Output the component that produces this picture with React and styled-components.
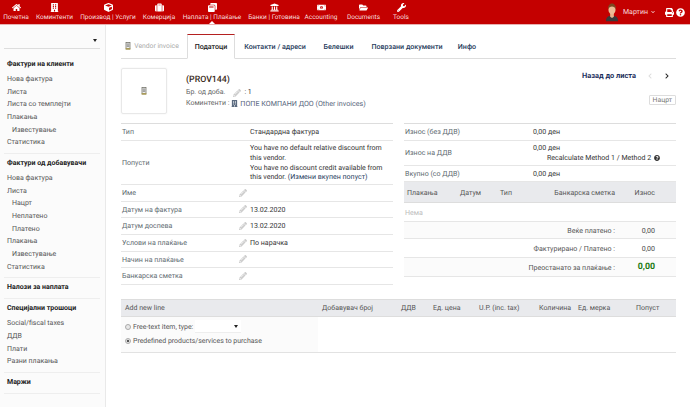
import styled, { createGlobalStyle } from "styled-components";
import {
  FaHome,
  FaBuilding,
  FaCube,
  FaSuitcase,
  FaWindowRestore,
  FaUniversity,
  FaMoneyBillAlt,
  FaFolderOpen,
  FaWrench,
  FaPrint,
  FaQuestionCircle,
  FaPencilAlt,
  FaChevronLeft,
  FaChevronRight,
  FaChevronDown,
} from "react-icons/fa";

const GlobalStyle = createGlobalStyle`
  html, body {
    margin: 0;
    padding: 0;
    background: #fff;
  }
  body {
    font-family: Roboto, "Liberation Sans", sans-serif;
    font-size: 7px;
    color: #333;
    overflow: hidden;
    text-rendering: geometricPrecision;
  }
  * {
    box-sizing: border-box;
  }
`;

const Page = styled.div`
  width: 690px;
  height: 407px;
  display: flex;
  flex-direction: column;
  overflow: hidden;
`;

const TopBar = styled.div`
  height: 25px;
  flex: none;
  background: #c40000;
  border-bottom: 1px solid #e8b0b0;
  display: flex;
  align-items: flex-start;
  padding-left: 3px;
  color: #f6dede;
  position: relative;
`;

const NavItem = styled.div`
  width: ${({ $w }) => $w}px;
  margin-right: ${({ $gap }) => $gap}px;
  flex: none;
  height: 24px;
  display: flex;
  flex-direction: column;
  align-items: center;
  padding-top: 3px;
  font-size: 6.5px;
  line-height: 9px;
  white-space: nowrap;
  position: relative;

  svg {
    display: block;
    width: 9px;
    height: 9px;
    color: #fff;
    margin-bottom: 1px;
  }

  ${({ $active }) =>
    $active &&
    `
    &::after {
      content: "";
      position: absolute;
      bottom: 0;
      left: 50%;
      margin-left: -3px;
      border-left: 3px solid transparent;
      border-right: 3px solid transparent;
      border-bottom: 3px solid #fff;
    }
  `}
`;

const UserBox = styled.div`
  margin-left: auto;
  height: 24px;
  display: flex;
  align-items: center;
  padding-right: 5px;
  font-size: 7px;

  svg.chev {
    width: 4px;
    height: 4px;
    margin: 0 8px 0 3px;
  }
  svg.tool {
    width: 9px;
    height: 9px;
    color: #fff;
    margin-left: 2px;
  }
`;

const Avatar = styled.svg`
  width: 14px;
  height: 20px;
  margin-right: 4px;
`;

const Body = styled.div`
  flex: 1;
  display: flex;
  min-height: 0;
`;

const Sidebar = styled.div`
  width: 106px;
  flex: none;
  background: #fbfbfb;
  border-right: 1px solid #e9e9e9;
  padding: 10px 5px 0 4px;
`;

const SideSelect = styled.div`
  height: 14px;
  border-bottom: 1px solid #ddd;
  position: relative;
  margin-bottom: 10px;

  &::after {
    content: "";
    position: absolute;
    right: 3px;
    top: 4px;
    border-left: 2px solid transparent;
    border-right: 2px solid transparent;
    border-top: 3px solid #222;
  }
`;

const SideGroup = styled.div`
  border-bottom: 1px solid #eee;
  padding: 0 0 ${({ $pb }) => $pb}px 3px;
  margin-bottom: 4px;
`;

const SideTitle = styled.div`
  font-weight: 700;
  color: #222;
  font-size: 7px;
  line-height: 11px;
`;

const SideLink = styled.div`
  color: #555;
  font-size: 7px;
  line-height: 12.65px;
  padding-left: ${({ $sub }) => ($sub ? 5 : 0)}px;
  white-space: nowrap;

  ${SideTitle} + & {
    margin-top: 3px;
  }
`;

const Main = styled.div`
  flex: 1;
  min-width: 0;
  padding: 9px 14px 0 15px;
`;

const Tabs = styled.div`
  height: 25px;
  display: flex;
  align-items: flex-end;
  border-bottom: 1px solid #ddd;
`;

const Tab = styled.div`
  height: 24px;
  width: ${({ $w }) => $w}px;
  flex: none;
  display: flex;
  align-items: center;
  justify-content: center;
  gap: 2px;
  font-size: 7.1px;
  font-weight: 500;
  white-space: nowrap;
  color: ${({ $muted }) => ($muted ? "#aaa" : "#263c5c")};

  ${({ $muted }) => $muted && "font-weight: 400; font-size: 6.8px; padding-right: 5px;"}
  ${({ $active }) =>
    $active &&
    `
    color: #222;
    background: #fff;
    border: 1px solid #ddd;
    border-top: 1px solid #b52020;
    border-bottom: 1px solid #fff;
    margin-bottom: -1px;
    height: 25px;
  `}
`;

const DocIcon = styled.svg`
  width: ${({ $s }) => $s}px;
  height: ${({ $s }) => $s}px;
  flex: none;
`;

const Head = styled.div`
  height: 64px;
  display: flex;
  padding-top: 9px;
`;

const Thumb = styled.div`
  width: 46px;
  height: 46px;
  flex: none;
  border: 1px solid #e8e8e8;
  border-radius: 2px;
  box-shadow: 0 0 2px #eee;
  display: flex;
  align-items: center;
  justify-content: center;
  margin-right: 19px;
`;

const HeadInfo = styled.div`
  flex: 1;
  padding-top: 6px;
`;

const RefTitle = styled.div`
  font-size: 8.8px;
  font-weight: 500;
  color: #3a2a20;
  line-height: 13px;
`;

const RefLine = styled.div`
  font-size: 7px;
  line-height: 11px;
  color: #666;
  display: flex;
  align-items: center;
  gap: 2px;

  span {
    color: #333;
  }
  b {
    font-weight: 400;
    font-size: 7.15px;
    color: #56657c;
  }
`;

const CompanyIcon = styled(FaBuilding)`
  width: 7px;
  height: 7px;
  color: #5b6b80;
`;

const HeadRight = styled.div`
  width: 95px;
  flex: none;
  display: flex;
  flex-direction: column;
  align-items: flex-end;
  padding-top: 3px;
`;

const BackRow = styled.div`
  display: flex;
  align-items: center;
  width: 100%;
  font-size: 7.4px;
  font-weight: 700;
  color: #1c2f5c;
  line-height: 10px;
  padding-right: 6px;
  justify-content: flex-end;

  svg {
    width: 6px;
    height: 6px;
    margin-left: 11px;
    color: #222;
  }
  svg.off {
    color: #ddd;
  }
`;

const Badge = styled.div`
  margin-top: 14px;
  border: 1px solid #ddd;
  border-radius: 1px;
  padding: 0 3px;
  height: 10px;
  line-height: 8px;
  font-size: 6.8px;
  color: #777;
`;

const Columns = styled.div`
  display: flex;
  justify-content: space-between;
`;

const Column = styled.div`
  width: 272px;
  border-top: 1px solid #ddd;
`;

const Row = styled.div`
  display: flex;
  align-items: center;
  height: ${({ $h }) => $h}px;
  border-bottom: 1px solid #e6e6e6;
  font-size: 7.05px;
  line-height: 9.6px;
`;

const Label = styled.div`
  width: ${({ $w }) => $w}px;
  flex: none;
  padding-left: 1px;
  color: #5e6a70;
`;

const PencilCell = styled.div`
  width: 11px;
  flex: none;
  display: flex;

  svg {
    width: 8px;
    height: 8px;
    color: #ccc;
  }
`;

const Value = styled.div`
  flex: 1;
  color: #333;
  min-width: 0;
`;

const ValueLink = styled.span`
  color: #263c5c;
`;

const Recalc = styled.div`
  padding-left: 14px;
  display: flex;
  align-items: center;
  gap: 3px;
  white-space: nowrap;
`;

const PayHead = styled.div`
  height: 21px;
  background: #e9eaed;
  border-bottom: 1px solid #ddd;
  display: grid;
  grid-template-columns: 53px 40px 115px 40px;
  align-items: center;
  padding-left: 3px;
  font-size: 7.05px;
  color: #555;
`;

const PayCell = styled.div`
  text-align: ${({ $right }) => ($right ? "right" : "left")};
  white-space: nowrap;
`;

const PayType = styled.span`
  float: left;
`;

const NoneRow = styled.div`
  height: 19px;
  border-bottom: 1px solid #e6e6e6;
  display: flex;
  align-items: center;
  padding-left: 1px;
  font-size: 7.05px;
  color: #bbb;
`;

const SumRow = styled.div`
  height: ${({ $h }) => $h}px;
  display: flex;
  align-items: center;
  justify-content: flex-end;
  padding-right: 21px;
  background: ${({ $shade }) => ($shade ? "#fbfbfb" : "#fff")};
  border-bottom: 1px solid #e6e6e6;
  font-size: 7.05px;
  color: #555;
`;

const SumValue = styled.div`
  width: 40px;
  text-align: right;
  color: ${({ $green }) => ($green ? "#1a7a10" : "#444")};
  font-size: ${({ $green }) => ($green ? 8.8 : 7.05)}px;
  font-weight: ${({ $green }) => ($green ? 700 : 400)};
`;

const Lines = styled.div`
  margin-top: 14px;
  border-bottom: 1px solid #e2e2e2;
`;

const LinesHead = styled.div`
  height: 18px;
  background: #e9eaed;
  border-top: 1px solid #ddd;
  border-bottom: 1px solid #ddd;
  display: grid;
  grid-template-columns: 197px 79px 32px 46px 60px 39px 58px 44px;
  align-items: center;
  padding-left: 4px;
  font-size: 7px;
  color: #555;
  white-space: nowrap;
`;

const LinesBody = styled.div`
  height: 35px;
`;

const AddCell = styled.div`
  width: 197px;
  height: 100%;
  background: #fbfbfb;
  padding: 3px 0 0 4px;
`;

const RadioRow = styled.div`
  display: flex;
  align-items: center;
  height: 14px;
  font-size: 6.95px;
  color: #555;
  white-space: nowrap;
`;

const Radio = styled.span`
  width: 6px;
  height: 6px;
  border-radius: 50%;
  border: 1px solid #aaa;
  background: ${({ $on }) =>
    $on ? "radial-gradient(circle, #555 0 1.4px, #eee 1.6px)" : "#e8e8e8"};
  margin-right: 2px;
  flex: none;
`;

const TypeSelect = styled.div`
  width: 46px;
  height: 13px;
  background: #fff;
  border-bottom: 1px solid #eee;
  margin-left: 2px;
  position: relative;

  &::after {
    content: "";
    position: absolute;
    right: 3px;
    top: 5px;
    border-left: 2px solid transparent;
    border-right: 2px solid transparent;
    border-top: 3px solid #222;
  }
`;

const InvoiceIcon = ({ size }) => (
  <DocIcon $s={size} viewBox="0 0 8 10">
    <rect x="1.500" y="0.500" width="5" height="7.500" fill="#eee" stroke="#6a6a60" strokeWidth="0.9" />
    <path d="M2.500 2.500h3M2.500 4h3M2.500 5.500h3" stroke="#555" strokeWidth="0.7" />
    <rect x="1" y="7.500" width="6" height="2.200" fill="#a89a5a" />
  </DocIcon>
);

const navItems = [
  { label: "Почетна", icon: <FaHome />, w: 26, gap: 7 },
  { label: "Коминтенти", icon: <FaBuilding />, w: 37, gap: 7 },
  { label: "Производ | Услуги", icon: <FaCube />, w: 56, gap: 7 },
  { label: "Комерција", icon: <FaSuitcase />, w: 32, gap: 8 },
  { label: "Наплата | Плаќање", icon: <FaWindowRestore />, w: 58, gap: 8, active: true },
  { label: "Банки | Готовина", icon: <FaUniversity />, w: 50, gap: 8 },
  { label: "Accounting", icon: <FaMoneyBillAlt />, w: 28, gap: 12 },
  { label: "Documents", icon: <FaFolderOpen />, w: 33, gap: 13 },
  { label: "Tools", icon: <FaWrench />, w: 16, gap: 0 },
];

const sideGroups = [
  {
    title: "Фактури на клиенти",
    links: [
      ["Нова фактура"],
      ["Листа"],
      ["Листа со темплејти"],
      ["Плакања"],
      ["Известување", true],
      ["Статистика"],
    ],
  },
  {
    title: "Фактури од добавувачи",
    links: [
      ["Нова фактура"],
      ["Листа"],
      ["Нацрт", true],
      ["Неплатено", true],
      ["Платено", true],
      ["Плакања"],
      ["Известување", true],
      ["Статистика"],
    ],
  },
  { title: "Налози за наплата", links: [] },
  {
    title: "Специјални трошоци",
    links: [["Social/fiscal taxes"], ["ДДВ"], ["Плати"], ["Разни плакања"]],
  },
  { title: "Маржи", links: [] },
];

const fields = [
  { label: "Име" },
  { label: "Датум на фактура", value: "13.02.2020" },
  { label: "Датум доспева", value: "13.02.2020" },
  { label: "Услови на плаќање", value: "По нарачка" },
  { label: "Начин на плаќање" },
  { label: "Банкарска сметка" },
];

const lineColumns = [
  "Add new line",
  "Добавувач број",
  "ДДВ",
  "Ед. цена",
  "U.P. (inc. tax)",
  "Количина",
  "Ед. мерка",
  "Попуст",
];

const App = () => (
  <Page>
    <GlobalStyle />
    <TopBar>
      {navItems.map((item) => (
        <NavItem key={item.label} $w={item.w} $gap={item.gap} $active={item.active}>
          {item.icon}
          {item.label}
        </NavItem>
      ))}
      <UserBox>
        <Avatar viewBox="0 0 15 20">
          <path d="M1 20c0-5 3-6 6.500-6s6.500 1 6.500 6z" fill="#3a3a3a" />
          <path d="M5.500 11h4v4l-2 1.500-2-1.500z" fill="#e8b48c" />
          <ellipse cx="7.500" cy="7.500" rx="3.800" ry="5" fill="#ecbd96" />
          <path d="M3.500 7c-.5-4 2-6 4-6s4.500 2 4 6c-.8-2-2-3-4-3s-3.200 1-4 3z" fill="#7a4a22" />
        </Avatar>
        Мартин
        <FaChevronDown className="chev" />
        <FaPrint className="tool" />
        <FaQuestionCircle className="tool" />
      </UserBox>
    </TopBar>
    <Body>
      <Sidebar>
        <SideSelect />
        {sideGroups.map((group) => (
          <SideGroup key={group.title} $pb={group.links.length ? 4 : 5}>
            <SideTitle>{group.title}</SideTitle>
            {group.links.map(([text, sub]) => (
              <SideLink key={text + (sub ? "s" : "")} $sub={sub}>
                {text}
              </SideLink>
            ))}
          </SideGroup>
        ))}
      </Sidebar>
      <Main>
        <Tabs>
          <Tab $w={66} $muted>
            <InvoiceIcon size={8} />
            Vendor invoice
          </Tab>
          <Tab $w={48} $active>
            Податоци
          </Tab>
          <Tab $w={80}>Контакти / адреси</Tab>
          <Tab $w={47}>Белешки</Tab>
          <Tab $w={90}>Поврзани документи</Tab>
          <Tab $w={30}>Инфо</Tab>
        </Tabs>
        <Head>
          <Thumb>
            <InvoiceIcon size={8} />
          </Thumb>
          <HeadInfo>
            <RefTitle>(PROV144)</RefTitle>
            <RefLine>
              Бр. од доба.
              <PencilCell style={{ width: 9, marginLeft: 6 }}>
                <FaPencilAlt />
              </PencilCell>
              <span>: 1</span>
            </RefLine>
            <RefLine>
              Коминтенти :
              <CompanyIcon />
              <b>ПОПЕ КОМПАНИ ДОО (Other invoices)</b>
            </RefLine>
          </HeadInfo>
          <HeadRight>
            <BackRow>
              Назад до листа
              <FaChevronLeft className="off" />
              <FaChevronRight />
            </BackRow>
            <Badge>Нацрт</Badge>
          </HeadRight>
        </Head>
        <Columns>
          <Column>
            <Row $h={17}>
              <Label $w={129}>Тип</Label>
              <Value>Стандардна фактура</Value>
            </Row>
            <Row $h={44}>
              <Label $w={129}>Попусти</Label>
              <Value>
                You have no default relative discount from this vendor.
                <br />
                You have no discount credit available from
                <br />
                this vendor. <ValueLink>(Измени вкупен попуст)</ValueLink>
              </Value>
            </Row>
            {fields.map((field) => (
              <Row key={field.label} $h={16.67}>
                <Label $w={118}>{field.label}</Label>
                <PencilCell>
                  <FaPencilAlt />
                </PencilCell>
                <Value>{field.value}</Value>
              </Row>
            ))}
          </Column>
          <Column>
            <Row $h={17}>
              <Label $w={129}>Износ (без ДДВ)</Label>
              <Value>0,00 ден</Value>
            </Row>
            <Row $h={25}>
              <Label $w={129}>Износ на ДДВ</Label>
              <Value>
                0,00 ден
                <Recalc>
                  Recalculate Method 1 / Method 2
                  <FaQuestionCircle size={6} color="#333" />
                </Recalc>
              </Value>
            </Row>
            <Row $h={16}>
              <Label $w={129}>Вкупно (со ДДВ)</Label>
              <Value>0,00 ден</Value>
            </Row>
            <PayHead>
              <PayCell>Плакања</PayCell>
              <PayCell>Датум</PayCell>
              <PayCell $right>
                <PayType>Тип</PayType>
                Банкарска сметка
              </PayCell>
              <PayCell $right>Износ</PayCell>
            </PayHead>
            <NoneRow>Нема</NoneRow>
            <SumRow $h={17} $shade>
              Веќе платено :<SumValue>0,00</SumValue>
            </SumRow>
            <SumRow $h={19}>
              Фактурирано / Платено :<SumValue>0,00</SumValue>
            </SumRow>
            <SumRow $h={19} $shade>
              Преостанато за плаќање :<SumValue $green>0,00</SumValue>
            </SumRow>
          </Column>
        </Columns>
        <Lines>
          <LinesHead>
            {lineColumns.map((col) => (
              <div key={col}>{col}</div>
            ))}
          </LinesHead>
          <LinesBody>
            <AddCell>
              <RadioRow>
                <Radio />
                Free-text item, type:
                <TypeSelect />
              </RadioRow>
              <RadioRow>
                <Radio $on />
                Predefined products/services to purchase
              </RadioRow>
            </AddCell>
          </LinesBody>
        </Lines>
      </Main>
    </Body>
  </Page>
);

export default App;
